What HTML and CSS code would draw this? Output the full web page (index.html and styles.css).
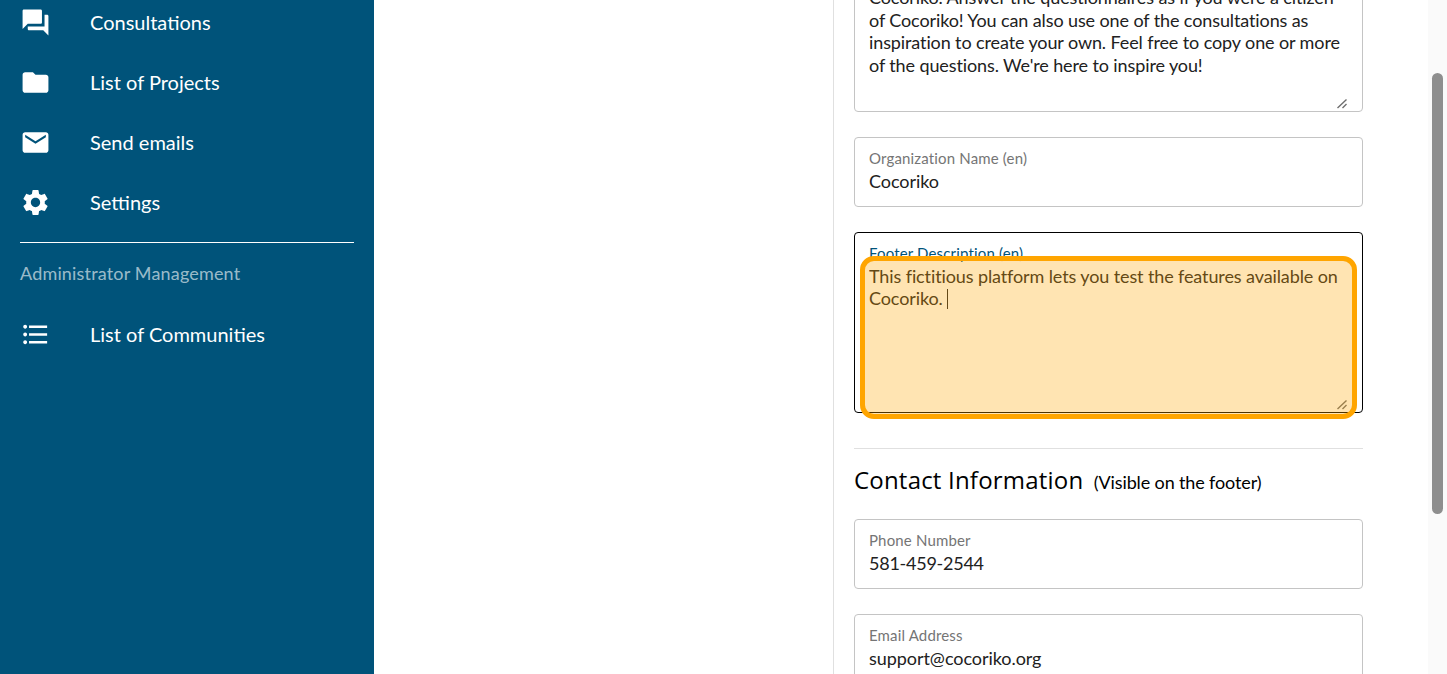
FILE: index.html
```html
<!DOCTYPE html>
<html lang="en">
<head>
<meta charset="utf-8">
<title>Cocoriko settings</title>
<link rel="stylesheet" href="styles.css">
</head>
<body>
<div class="page">
  <nav class="sidebar">
    <a class="nav-item"><svg class="nav-icon" viewBox="0 0 24 24"><path d="M21 6h-2v9H6v2c0 .55.45 1 1 1h11l4 4V7c0-.55-.45-1-1-1zm-4 6V3c0-.55-.45-1-1-1H3c-.55 0-1 .45-1 1v14l4-4h10c.55 0 1-.45 1-1z"/></svg><span>Consultations</span></a>
    <a class="nav-item"><svg class="nav-icon" viewBox="0 0 24 24"><path d="M10 4H4c-1.1 0-1.99.9-1.99 2L2 18c0 1.1.9 2 2 2h16c1.1 0 2-.9 2-2V8c0-1.1-.9-2-2-2h-8l-2-2z"/></svg><span>List of Projects</span></a>
    <a class="nav-item"><svg class="nav-icon" viewBox="0 0 24 24"><path d="M20 4H4c-1.1 0-1.99.9-1.99 2L2 18c0 1.1.9 2 2 2h16c1.1 0 2-.9 2-2V6c0-1.1-.9-2-2-2zm0 4l-8 5-8-5V6l8 5 8-5v2z"/></svg><span>Send emails</span></a>
    <a class="nav-item"><svg class="nav-icon" viewBox="0 0 24 24"><path d="M19.14 12.94c.04-.3.06-.61.06-.94 0-.32-.02-.64-.07-.94l2.03-1.58c.18-.14.23-.41.12-.61l-1.92-3.32c-.12-.22-.37-.29-.59-.22l-2.39.96c-.5-.38-1.03-.7-1.62-.94l-.36-2.54c-.04-.24-.24-.41-.48-.41h-3.84c-.24 0-.43.17-.47.41l-.36 2.54c-.59.24-1.13.57-1.62.94l-2.39-.96c-.22-.08-.47 0-.59.22L2.74 8.87c-.12.21-.08.47.12.61l2.03 1.58c-.05.3-.09.63-.09.94s.02.64.07.94l-2.03 1.58c-.18.14-.23.41-.12.61l1.92 3.32c.12.22.37.29.59.22l2.39-.96c.5.38 1.03.7 1.62.94l.36 2.54c.05.24.24.41.48.41h3.84c.24 0 .44-.17.47-.41l.36-2.54c.59-.24 1.13-.56 1.62-.94l2.39.96c.22.08.47 0 .59-.22l1.92-3.32c.12-.22.07-.47-.12-.61l-2.01-1.58zM12 15.6c-1.98 0-3.6-1.62-3.6-3.6s1.62-3.6 3.6-3.6 3.6 1.62 3.6 3.6-1.62 3.6-3.6 3.6z"/></svg><span>Settings</span></a>
    <hr class="nav-divider">
    <div class="nav-heading">Administrator Management</div>
    <a class="nav-item"><svg class="nav-icon" viewBox="0 0 24 24"><path d="M4 10.5c-.83 0-1.5.67-1.5 1.5s.67 1.5 1.5 1.5 1.5-.67 1.5-1.5-.67-1.5-1.5-1.5zm0-6c-.83 0-1.5.67-1.5 1.5S3.17 7.5 4 7.5 5.5 6.83 5.5 6 4.83 4.5 4 4.5zm0 12c-.83 0-1.5.68-1.5 1.5s.68 1.5 1.5 1.5 1.5-.68 1.5-1.5-.67-1.5-1.5-1.5zM7 19h14v-2H7v2zm0-6h14v-2H7v2zm0-8v2h14V5H7z"/></svg><span>List of Communities</span></a>
  </nav>
  <main class="main">
    <div class="form-column">
      <div class="field field-first">
        <div class="area area-first">Cocoriko. Answer the questionnaires as if you were a citizen of Cocoriko! You can also use one of the consultations as inspiration to create your own. Feel free to copy one or more of the questions. We're here to inspire you!</div>
        <svg class="grip" viewBox="0 0 10 10"><path d="M0.5 9 9.5 0.5M5.5 9 9.5 5"/></svg>
      </div>
      <div class="field">
        <label class="field-label">Organization Name (en)</label>
        <div class="field-value">Cocoriko</div>
      </div>
      <div class="field field-focused">
        <label class="field-label">Footer Description (en)</label>
        <div class="area area-footer">This fictitious platform lets you test the features available on Cocoriko. <span class="caret"></span></div>
        <svg class="grip" viewBox="0 0 10 10"><path d="M0.5 9 9.5 0.5M5.5 9 9.5 5"/></svg>
        <div class="highlight"></div>
      </div>
      <hr class="section-divider">
      <h2 class="section-title">Contact Information <small>(Visible on the footer)</small></h2>
      <div class="field">
        <label class="field-label">Phone Number</label>
        <div class="field-value field-phone">581-459-2544</div>
      </div>
      <div class="field">
        <label class="field-label">Email Address</label>
        <div class="field-value">support@cocoriko.org</div>
      </div>
    </div>
  </main>
  <div class="scroll-track"><div class="scroll-thumb"></div></div>
</div>
</body>
</html>
```

FILE: styles.css
```css
* { box-sizing: border-box; }
html, body { margin: 0; height: 100%; overflow: hidden; }
body { font-family: Lato, "Liberation Sans", sans-serif; font-size: 18px; color: #212121; background: #fff; }

.page { display: flex; height: 674px; overflow: hidden; }

.sidebar { width: 374px; flex: none; background: #00537a; color: #fff; padding: 0 20px; overflow: hidden; }
.nav-item { display: flex; align-items: center; height: 60px; margin-left: -20px; padding-left: 20px; font-size: 20px; color: #fff; }
.sidebar > .nav-item:first-child { margin-top: -7px; }
.nav-item span { margin-left: 39px; margin-bottom: 2px; }
.nav-icon { width: 31px; height: 31px; fill: #fff; flex: none; margin-top: -2px; }
.nav-divider { border: 0; border-top: 1px solid #fff; margin: 9px 0 0; }
.nav-heading { font-size: 18px; line-height: 22px; letter-spacing: 0.17px; color: rgba(255, 255, 255, 0.62); margin-top: 19px; margin-bottom: 21px; }

.main { flex: 1; min-width: 0; padding-left: 459px; }
.form-column { width: 530px; min-height: 800px; border-left: 1px solid #e0e0e0; padding-left: 20px; margin-top: -48px; }

.field { position: relative; width: 509px; border: 1px solid #c4c4c4; border-radius: 4px; background: #fff; padding: 10px 14px 0; height: 70px; margin-bottom: 25px; }
.field-label { display: block; font-size: 15px; line-height: 20px; letter-spacing: 0.16px; color: #757575; }
.field-value { font-size: 18px; line-height: 24px; margin-top: 1px; letter-spacing: -0.05px; }
.field-phone { letter-spacing: -0.25px; }

.area { overflow: hidden; background: #fff; font-size: 18px; line-height: 22.5px; letter-spacing: -0.11px; }
.field-first { height: 160px; padding-top: 33px; }
.area-first { height: 122px; }

.grip { position: absolute; right: 15px; bottom: 2px; width: 10px; height: 10px; fill: none; stroke: #6f6f6f; stroke-width: 1.4; }

.field-focused { height: 181px; border-color: #000; }
.field-focused .field-label { color: #00537a; line-height: 18px; margin-top: 1px; }
.area-footer { height: 146px; padding-top: 3px; line-height: 22px; }
.caret { display: inline-block; width: 1px; height: 20px; background: #212121; vertical-align: -4px; }
.highlight { position: absolute; left: 5px; top: 23px; width: 497px; height: 163px; border: 5px solid #ffa500; border-radius: 14px; background: rgba(255, 165, 0, 0.3); }

.section-divider { border: 0; border-top: 1px solid #e0e0e0; width: 509px; margin: 35px 0 0; }
.section-title { font-family: "Open Sans", sans-serif; font-weight: 400; font-size: 24px; line-height: 32px; letter-spacing: 0.2px; color: #000; margin: 15px 0 21px; }
.section-title small { font-family: Lato, sans-serif; font-size: 18px; letter-spacing: -0.13px; margin-left: 4px; }

.scroll-track { position: absolute; right: 0; top: 0; width: 19px; height: 674px; background: #fafafa; }
.scroll-thumb { width: 11px; height: 441px; margin: 73px 0 0 4px; border-radius: 6px; background: #8e8e8e; }
```
